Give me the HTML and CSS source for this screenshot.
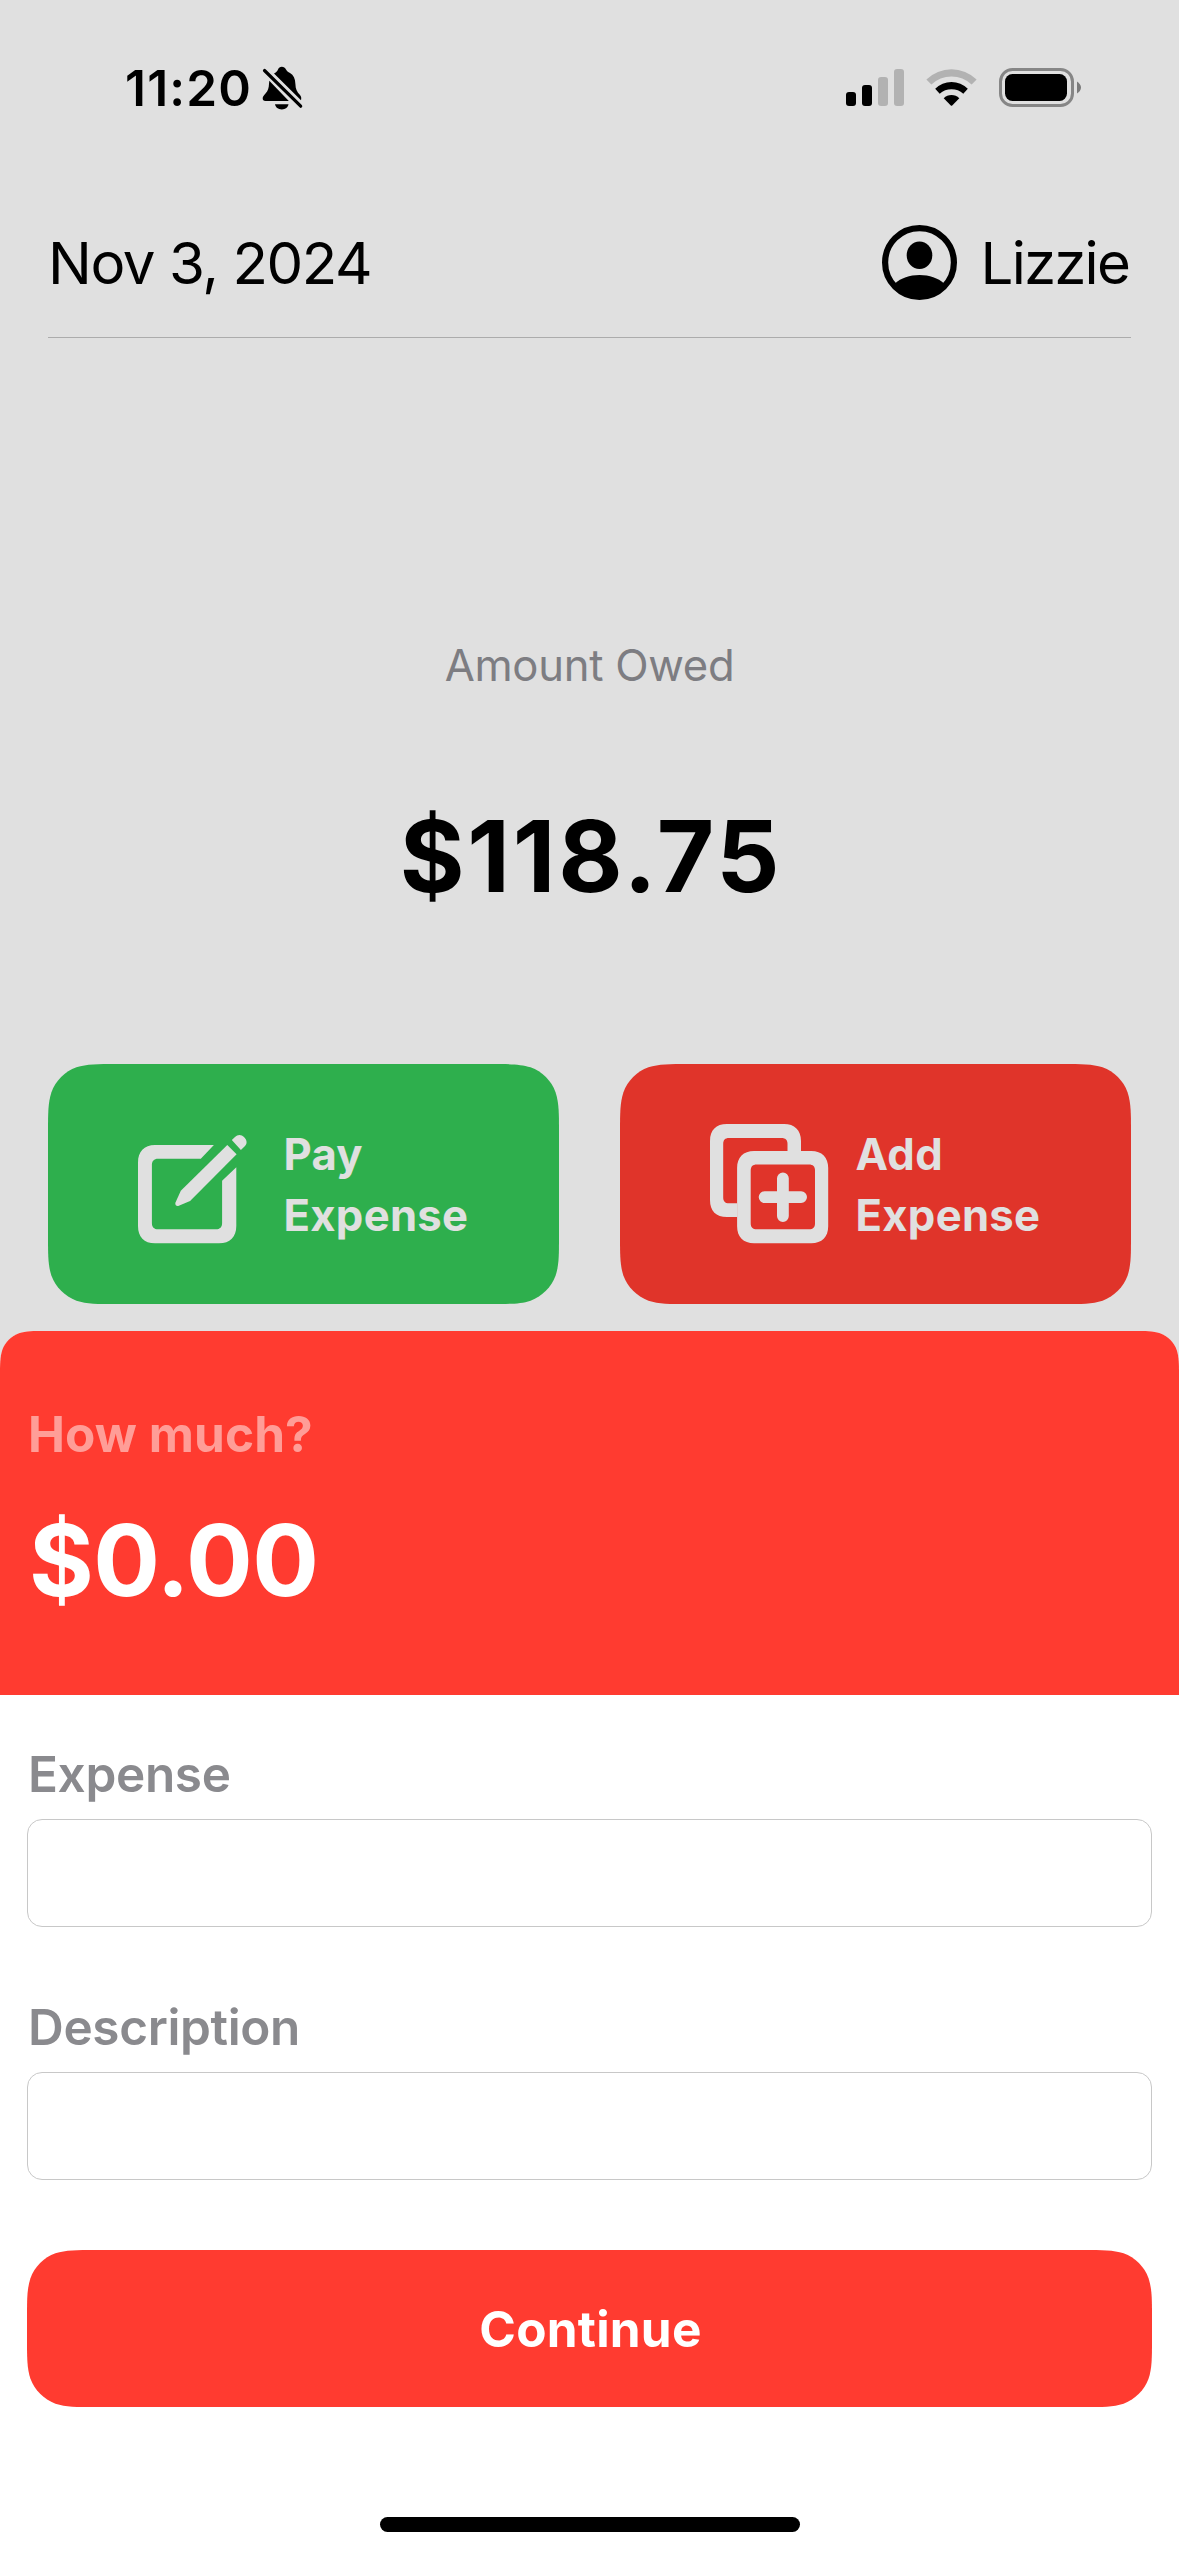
FILE: index.html
```html
<!DOCTYPE html>
<html lang="en">
<head>
<meta charset="utf-8">
<title>Expenses</title>
<link rel="stylesheet" href="styles.css">
</head>
<body>
<main class="home">
  <div class="status">
    <div class="status-left">
      <span class="time">11:20</span>
      <svg class="bell" width="41" height="44" viewBox="0 0 41 44">
        <path d="M12 7.4C14 6.5 15.3 5.5 16 3.5C16.8 1.5 18 .7 19.8 .7C21.8 .7 23 1.6 24 3.5C24.8 5 26 6.2 28 7C31.5 9 33.3 12.5 33.4 18C33.5 23 35 26 38 29C39.3 30.5 39.5 32 39 34.2Z"/>
        <path d="M7.3 14.8L26.8 35H3.5C1.5 35 .7 34 .7 32.5C.7 31 1.5 29.5 3.5 27.5C6 25 6.8 22 7 18Z"/>
        <path d="M13 38.2H26.5C26 41.3 23.5 43.4 19.8 43.4C16 43.4 13.5 41.3 13 38.2Z"/>
        <path d="M2.5 4.5L38.7 40.2" stroke="#000" stroke-width="3.2" stroke-linecap="round"/>
      </svg>
    </div>
    <div class="status-right">
      <svg width="58" height="37" viewBox="0 0 58 37">
        <rect x="0" y="23" width="10" height="14" rx="3"/>
        <rect x="16" y="16" width="10" height="21" rx="3"/>
        <rect class="dim" x="32" y="8" width="10" height="29" rx="3"/>
        <rect class="dim" x="48" y="0" width="10" height="37" rx="3"/>
      </svg>
      <svg width="51" height="37" viewBox="0 1 51 37">
        <path class="dim" d="M.4 11.4A36.2 36.2 0 0 1 50.6 11.4L45.6 16.6A28.7 28.7 0 0 0 5.4 16.6Z"/>
        <path d="M9.2 20.8A22.8 22.8 0 0 1 41.8 20.8L37.3 25.7A17.8 17.8 0 0 0 13.7 25.7Z"/>
        <path d="M17.7 30.2A11 11 0 0 1 33.3 30.2L26.2 37.5Q25.5 38.2 24.8 37.5Z"/>
      </svg>
      <svg width="83" height="39" viewBox="0 0 83 39">
        <rect x="1.5" y="1.5" width="72" height="36" rx="12" fill="none" stroke="#868686" stroke-width="3"/>
        <rect x="6" y="6" width="62" height="27" rx="7.5"/>
        <path d="M78 13.5C80.3 15 82 17 82 19.5C82 22 80.3 24.2 78 25.5Z" fill="#7b7b7b"/>
      </svg>
    </div>
  </div>

  <header class="header">
    <span class="date">Nov 3, 2024</span>
    <div class="user">
      <svg width="75" height="75" viewBox="0 0 75 75">
        <circle cx="37.5" cy="37.5" r="34.4" fill="none" stroke="#000" stroke-width="6.2"/>
        <ellipse cx="37.5" cy="30.2" rx="12.8" ry="13.8"/>
        <path d="M13 58.5C19 53 27.5 50 37.5 50C47.5 50 56 53 62 58.5C56 68 47.5 72.5 37.5 72.5C27.5 72.5 19 68 13 58.5Z"/>
      </svg>
      <span class="name">Lizzie</span>
    </div>
  </header>

  <section class="owed">
    <p class="owed-label">Amount Owed</p>
    <p class="owed-total">$118.75</p>
  </section>

  <div class="actions">
    <button class="card card-pay">
      <svg width="120" height="120" viewBox="0 -10 120 120">
        <path d="M75.9 11H17C6 11 0 17.5 0 28.5V92C0 103 6 109.3 17 109.3H81C92 109.3 98.3 103 98.3 92V33.3L84.1 46.7V89C84.1 93 82 95.3 78 95.3H20C16 95.3 13.9 93 13.9 89V31C13.9 27 16 24.7 20 24.7H62.8Z"/>
        <path d="M89.3 11L98.6 20.3L52.1 67L40.8 71.8C38.5 72.7 36.6 70.8 37.5 68.6L42.8 56.7Z"/>
        <path d="M93.8 6L97 3C99.5 .3 103.5 .3 106 3C109 6 109.5 9.5 107 12L102.9 16Z"/>
      </svg>
      <span>Pay<br>Expense</span>
    </button>
    <button class="card card-add">
      <svg width="120" height="120" viewBox="0 0 120 120">
        <path d="M91 27V17C91 6 84.5 0 74 0H17C6 0 0 6 0 17V76C0 87 6 93 17 93H27.1V79.3H19C15 79.3 13.2 77 13.2 73.5V20C13.2 16 15 14 19 14H71.5C75.5 14 77.5 16 77.5 20V27Z"/>
        <path fill-rule="evenodd" d="M44.1 27H101.2C112 27 118.2 33.5 118.2 44V102.3C118.2 113 112 119.3 101.2 119.3H44.1C33.3 119.3 27.1 113 27.1 102.3V44C27.1 33.5 33.3 27 44.1 27ZM46.7 40.5C42.7 40.5 40.7 42.5 40.7 46.5V99.3C40.7 103.3 42.7 105.3 46.7 105.3H99C103 105.3 105 103.3 105 99.3V46.5C105 42.5 103 40.5 99 40.5Z"/>
        <path d="M54.6 73.1H91.1M72.9 54.3V92" fill="none" stroke="#e0e0e0" stroke-width="11.8" stroke-linecap="round"/>
      </svg>
      <span>Add<br>Expense</span>
    </button>
  </div>
</main>

<section class="sheet">
  <div class="sheet-head">
    <p class="question">How much?</p>
    <p class="value">$0.00</p>
  </div>
  <form class="form">
    <label class="field">Expense<input type="text"></label>
    <label class="field">Description<input type="text"></label>
    <button class="continue" type="button">Continue</button>
  </form>
  <div class="home-bar"></div>
</section>
</body>
</html>
```
FILE: styles.css
```css
* { box-sizing: border-box; margin: 0; }

body {
  width: 1179px;
  height: 2556px;
  overflow: hidden;
  background: #e0e0e0;
  color: #000;
  font-family: Inter, "Liberation Sans", sans-serif;
}

svg { display: block; flex: none; }
button { border: 0; font: inherit; }

.home {
  height: 1331px;
  padding: 0 48px;
}

/* Status bar */
.status {
  display: flex;
  justify-content: space-between;
  height: 225px;
  padding: 58px 49px 0 77px;
}
.status-left { display: flex; gap: 10px; height: 60px; }
.time { font-size: 49.5px; font-weight: 600; line-height: 60px; letter-spacing: 1.2px; }
.bell { margin-top: 8px; }
.status-right { display: flex; gap: 22px; height: 60px; padding-top: 10px; align-items: flex-start; }
.status-right svg { margin-top: 1px; }
.status-right svg:last-child { margin-top: 0; }
.dim { fill: #b2b2b2; }

/* Header */
.header {
  display: flex;
  justify-content: space-between;
  height: 113px;
  border-bottom: 1px solid #acacac;
  font-size: 58.2px;
  line-height: 76px;
}
.date { letter-spacing: -1.42px; }
.user { display: flex; gap: 24px; padding-right: 2px; }
.name { letter-spacing: -1.81px; }

/* Balance */
.owed { padding-top: 297px; text-align: center; }
.owed-label {
  font-size: 43.6px;
  line-height: 61px;
  letter-spacing: -.28px;
  color: #7d7d82;
}
.owed-total {
  margin-top: 100px;
  padding-left: 3px;
  font-size: 99px;
  font-weight: 700;
  line-height: 120px;
  letter-spacing: 2.8px;
}

/* Action cards */
.actions { display: flex; justify-content: space-between; margin-top: 148px; }
.card {
  display: flex;
  align-items: center;
  gap: 25.5px;
  width: 511px;
  height: 240px;
  padding: 0 0 0 90px;
  color: #e0e0e0;
  fill: #e0e0e0;
  font-size: 43.6px;
  font-weight: 700;
  line-height: 61px;
  letter-spacing: .3px;
  text-align: left;
  clip-path: path("M68.79 0H442.21C462.02 0 471.92 0 482.58 3.37C494.22 7.61 503.39 16.78 507.63 28.42C511 39.08 511 48.98 511 68.79V171.21C511 191.02 511 200.92 507.63 211.58C503.39 223.22 494.22 232.39 482.58 236.63C471.92 240 462.02 240 442.21 240H68.79C48.98 240 39.08 240 28.42 236.63C16.78 232.39 7.61 223.22 3.37 211.58C0 200.92 0 191.02 0 171.21V68.79C0 48.98 0 39.08 3.37 28.42C7.61 16.78 16.78 7.61 28.42 3.37C39.08 0 48.98 0 68.79 0Z");
}
.card span { padding-top: 2px; }
.card-pay { background: #2eaf4d; }
.card-add { background: #e0342a; }

/* Bottom sheet */
.sheet {
  display: flex;
  flex-direction: column;
  height: 1225px;
  background: #fff;
  clip-path: path("M45.86 0H1133.14C1146.35 0 1152.95 0 1160.06 2.25C1167.82 5.07 1173.93 11.18 1176.75 18.94C1179 26.05 1179 32.65 1179 45.86V1225H0V45.86C0 32.65 0 26.05 2.25 18.94C5.07 11.18 11.18 5.07 18.94 2.25C26.05 0 32.65 0 45.86 0Z");
}
.sheet-head {
  height: 364px;
  padding: 73px 28px 0;
  background: #ff3b30;
  color: #fff;
}
.question {
  font-size: 49.5px;
  font-weight: 700;
  line-height: 60px;
  letter-spacing: .08px;
  color: #ff9d97;
}
.value {
  margin-top: 36px;
  padding-left: 1px;
  font-size: 99px;
  font-weight: 700;
  line-height: 120px;
  letter-spacing: -.6px;
}

.form {
  display: flex;
  flex-direction: column;
  gap: 70px;
  padding: 49px 27px 0;
}
.field {
  display: flex;
  flex-direction: column;
  gap: 15px;
  font-size: 49.5px;
  font-weight: 600;
  line-height: 60px;
  letter-spacing: -.35px;
  color: #8a8a8e;
  text-indent: 1px;
}
.field input {
  width: 100%;
  height: 108px;
  padding: 0 24px;
  border: 1px solid #c8c8c8;
  border-radius: 15px;
  background: #fff;
  font: 400 51px Inter, sans-serif;
  outline: 0;
}
.continue {
  height: 157px;
  padding: 0;
  background: #ff3b30;
  color: #fff;
  font-size: 49.5px;
  font-weight: 700;
  line-height: 60px;
  letter-spacing: .23px;
  text-indent: 2px;
  clip-path: path("M68.79 0H1056.21C1076.02 0 1085.92 0 1096.58 3.37C1108.22 7.61 1117.39 16.78 1121.63 28.42C1125 39.08 1125 48.98 1125 68.79V88.21C1125 108.02 1125 117.92 1121.63 128.58C1117.39 140.22 1108.22 149.39 1096.58 153.63C1085.92 157 1076.02 157 1056.21 157H68.79C48.98 157 39.08 157 28.42 153.63C16.78 149.39 7.61 140.22 3.37 128.58C0 117.92 0 108.02 0 88.21V68.79C0 48.98 0 39.08 3.37 28.42C7.61 16.78 16.78 7.61 28.42 3.37C39.08 0 48.98 0 68.79 0Z");
}
.home-bar {
  align-self: center;
  width: 420px;
  height: 15px;
  margin-top: 110px;
  border-radius: 8px;
  background: #000;
}
```
